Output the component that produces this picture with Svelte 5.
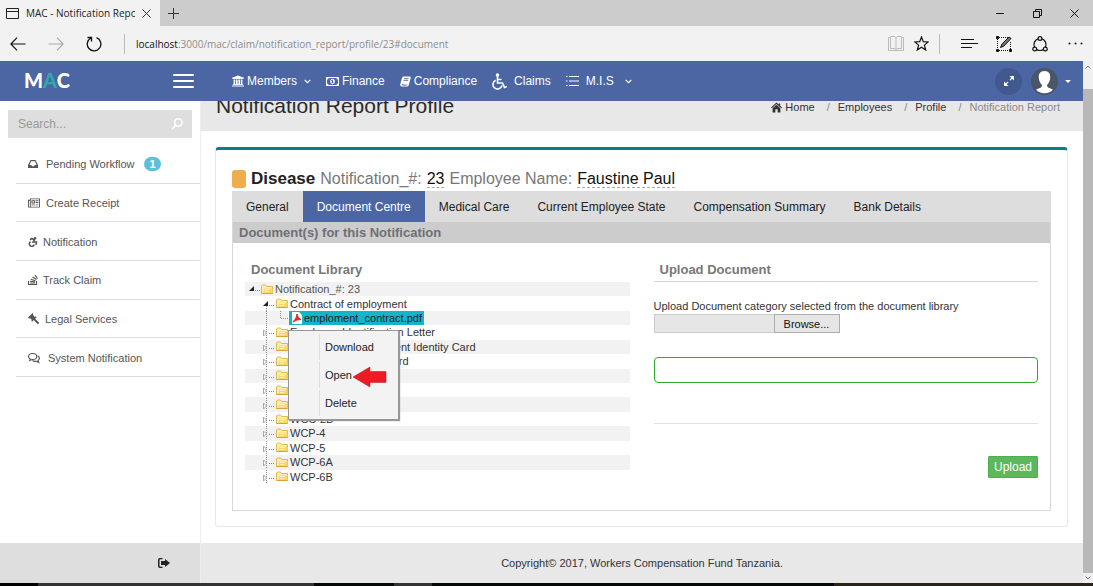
<script>
  const icons = {
    bank: { vb: '0 0 1920 1792', d: 'M960 0l960 384v128h-128q0 26-20.5 45t-48.5 19h-1526q-28 0-48.5-19t-20.5-45h-128v-128zM256 640h256v768h128v-768h256v768h128v-768h256v768h128v-768h256v768h59q28 0 48.5 19t20.5 45v64h-1664v-64q0-26 20.5-45t48.5-19h59v-768zM1851 1600q28 0 48.5 19t20.5 45v128h-1920v-128q0-26 20.5-45t48.5-19h1782z' },
    money: { vb: '0 0 26 18', d: 'M0 0H26V18H0ZM5 2A3 3 0 0 1 2 5V13A3 3 0 0 1 5 16H21A3 3 0 0 1 24 13V5A3 3 0 0 1 21 2ZM13 3.500A4.500 5.500 0 0 1 13 14.500A4.500 5.500 0 0 1 13 3.500ZM12.200 5.500L10.500 7V8H12V11H10.500V12.500H15.500V11H14V5.500Z' },
    book: { vb: '0 0 24 22', d: 'M8 0H22Q24 .5 23.500 3L19 19Q18 22 15 22H3Q0 21 .5 17L4.500 3Q5.500 0 8 0ZM9 4L8.500 6H18.500L19 4ZM8 8L7.500 10H17.500L18 8ZM4 17Q3 19.500 5 19.500H14.500Q16 19.500 17 17L17.500 18Z' },
    inbox: { vb: '0 0 20 18', d: 'M5 1H15L20 11V17H0V11ZM6 3.500L3 11H6.500L8 13.500H12L13.500 11H17L14 3.500Z' },
    news: { vb: '0 0 26 20', d: 'M4 0H26V18Q26 20 24 20H2Q0 20 0 18V3H4ZM6 2V18H24V2ZM2 5V18H4V5ZM7.500 4H15V11H7.500ZM9.500 6V9H13V6ZM16.500 4H22.500V6H16.500ZM16.500 8H22.500V10H16.500ZM7.500 13H15V15H7.500ZM16.500 13H22.500V15H16.500Z' },
    gavel: { vb: '0 0 24 24', d: 'M10 0L12 2L10.500 4L15 8.500L17 7L19 9L15.500 12.500L24 20.500Q24.500 23 21 24L12.500 15.500L9 19L7 17L8.500 15.500L4 11L2.500 12.500L0 10Z' },
    home: { vb: '0 0 24 22', d: 'M12 0L17 4.500V2H20V7.200L24 11L22.500 12.500L12 3.500L1.500 12.500L0 11ZM12 5L20.500 12.500V22H14.500V15H9.500V22H3.500V12.500Z' },
    logout: { vb: '0 0 24 20', d: 'M9 0V2.500H5Q3 2.500 3 5V15Q3 17.500 5 17.500H9V20H4Q0 20 0 16V4Q0 0 4 0ZM14 2L24 10L14 18V14H6V6H14Z' }
  };

  const sideLinks = [
    { icon: 'inbox', label: 'Pending Workflow', badge: '1', w: 10, gap: 8 },
    { icon: 'news', label: 'Create Receipt', w: 12, gap: 6 },
    { icon: 'chair', label: 'Notification', w: 10, gap: 5 },
    { icon: 'stack', label: 'Track Claim', w: 10, gap: 5 },
    { icon: 'gavel', label: 'Legal Services', w: 11, gap: 6 },
    { icon: 'comments', label: 'System Notification', w: 12, gap: 8 }
  ];

  const tabs = ['General', 'Document Centre', 'Medical Care', 'Current Employee State', 'Compensation Summary', 'Bank Details'];
  let activeTab = $state('Document Centre');

  const folders = [
    'Employee Identification Letter',
    "Employee's Government Identity Card",
    'Employee Pension Card',
    'WCC-1', 'WCC-2', 'WCC-2A', 'WCC-2B', 'WCP-4', 'WCP-5', 'WCP-6A', 'WCP-6B'
  ];
</script>

{#snippet glyph(name, w)}
  {#if name === 'chair'}
    <svg width={w} height={w} viewBox="0 0 20 20" fill="none" stroke="currentColor" stroke-width="3" aria-hidden="true">
      <circle cx="14" cy="2.500" r="2.500" fill="currentColor" stroke="none" />
      <path d="M4 5.500L8 3L13 6L10 10H17L16 16M5 9.500A5 5 0 1 0 12.500 15" />
    </svg>
  {:else if name === 'stack'}
    <svg width={w} height={w} viewBox="0 0 20 20" fill="none" stroke="currentColor" stroke-width="2.400" aria-hidden="true">
      <path d="M1 12V19H17V12M4 16H14M4 12.500L14 13.500M5.500 8.500L15 11.500M9 4L17 9M14 0L19 7" />
    </svg>
  {:else if name === 'comments'}
    <svg width={w} height={w} viewBox="0 0 24 22" fill="none" stroke="currentColor" stroke-width="2.200" aria-hidden="true">
      <path d="M9 2C4 2 1 4.500 1 8C1 10.500 2.500 12 4.500 13L3.500 16L8 14C14 14.500 17.500 12 17.500 8S14 2 9 2Z" />
      <path d="M19.500 6.500C23.500 9 24 13.500 20 16L21.500 20L16.500 17.500C13 18 10.500 17.500 9 16" />
    </svg>
  {:else}
    <svg width={w} height={w} viewBox={icons[name].vb} fill="currentColor" fill-rule="evenodd" aria-hidden="true"><path d={icons[name].d} /></svg>
  {/if}
{/snippet}

{#snippet chevron()}
  <svg width="7" height="5" viewBox="0 0 7 5" fill="none" stroke="currentColor" stroke-width="1.200" aria-hidden="true"><path d="M.7 .8L3.500 3.600L6.300 .8" /></svg>
{/snippet}

{#snippet folder()}
  <svg class="folder" width="12" height="11" viewBox="0 0 12 11" aria-hidden="true">
    <path d="M.5 9.500V2L1.500 1H4.500L5.500 2.500H11.500V9.500Z" fill="#fbeeb4" stroke="#e0b850" />
    <path d="M2 9.500L3.500 4.500H11.500V9.500Z" fill="#fbd766" />
    <path d="M4 5.500H9M4 7.500H8" stroke="#fff3c0" />
    <path d="M.5 9.500H11.500" stroke="#d9a23a" />
  </svg>
{/snippet}

<div class="window">
  <div class="titlebar">
    <div class="browsertab">
      <svg width="13" height="11" viewBox="0 0 13 11" fill="none" stroke="#222" aria-hidden="true"><path d="M.5 .5H12.500V10.500H.5ZM.5 3.500H12.500" /></svg>
      <span class="tabname">MAC - Notification Report</span>
      <button class="plain" aria-label="Close tab"><svg width="9" height="9" viewBox="0 0 9 9" stroke="#333"><path d="M.5 .5L8.500 8.500M8.500 .5L.5 8.500" /></svg></button>
    </div>
    <button class="plain newtab" aria-label="New tab"><svg width="11" height="11" viewBox="0 0 11 11" stroke="#333"><path d="M5.500 0V11M0 5.500H11" /></svg></button>
    <div class="winbtns">
      <button class="plain" aria-label="Minimize"><svg width="9" height="9" viewBox="0 0 9 9" stroke="#111"><path d="M0 4.500H8" /></svg></button>
      <button class="plain" aria-label="Restore"><svg width="9" height="9" viewBox="0 0 9 9" fill="none" stroke="#111"><path d="M.5 2.500H6.500V8.500H.5ZM2.500 2.500V.5H8.500V6.500H6.500" /></svg></button>
      <button class="plain" aria-label="Close"><svg width="9" height="9" viewBox="0 0 9 9" stroke="#111"><path d="M.5 .5L8.500 8.500M8.500 .5L.5 8.500" /></svg></button>
    </div>
  </div>

  <div class="addressbar">
    <button class="plain" aria-label="Back"><svg width="16" height="14" viewBox="0 0 16 14" fill="none" stroke="#111" stroke-width="1.200"><path d="M7 .7L.9 7L7 13.300M1 7H15.500" /></svg></button>
    <button class="plain" aria-label="Forward"><svg width="16" height="14" viewBox="0 0 16 14" fill="none" stroke="#aaa" stroke-width="1.200"><path d="M9 .7L15.100 7L9 13.300M15 7H.5" /></svg></button>
    <button class="plain" aria-label="Refresh"><svg width="16" height="16" viewBox="0 0 16 16" fill="none" stroke="#111" stroke-width="1.300"><path d="M5 2A6.800 6.800 0 1 0 10.500 1.700M1.500 1.500H5.500V5.500" /></svg></button>
    <span class="rule"></span>
    <span class="url"><b>localhost</b>:3000/mac/claim/notification_report/profile/23#document</span>
    <div class="tools">
      <button class="plain" aria-label="Reading view"><svg width="16" height="15" viewBox="0 0 16 15" fill="none" stroke="#bbb"><path d="M.5 1.500H2.500V.5H6.500L8 1.500L9.500 .5H13.500V1.500H15.500V14.500H.5V1.500M2.500 1.500V12.500H6.500L8 13.500L9.500 12.500H13.500V1.500M8 1.500V13.500" /></svg></button>
      <button class="plain" aria-label="Favorite"><svg width="15" height="15" viewBox="0 0 15 15" fill="none" stroke="#111" stroke-width="1.200"><path d="M7.500 1L9.300 5.700L14.200 6L10.400 9.100L11.700 14L7.500 11.200L3.300 14L4.600 9.100L.8 6L5.700 5.700Z" /></svg></button>
      <span class="rule"></span>
      <button class="plain hub" aria-label="Hub"><svg width="17" height="11" viewBox="0 0 17 11" stroke="#111"><path d="M0 1.500H13M0 5.500H17M0 9.500H11" /></svg></button>
      <button class="plain" aria-label="Web note"><svg width="16" height="16" viewBox="0 0 16 16" fill="none" stroke="#111"><path d="M3 1.500H13M3 14.500H13M1.500 3V13M14.500 6V13" stroke-dasharray="1 1" /><path d="M.5 .5H2.500V2.500H.5ZM.5 13.500H2.500V15.500H.5ZM13.500 13.500H15.500V15.500H13.500Z" fill="#111" /><path d="M4.500 11.500L6 8L13 1L15 2.500L8 10Z" fill="#777" /></svg></button>
      <button class="plain" aria-label="Share"><svg width="16" height="16" viewBox="0 0 16 16" fill="none" stroke="#111" stroke-width="1.200"><circle cx="8" cy="8.500" r="6" /><circle cx="8" cy="2.500" r="1.900" fill="#f2f2f2" /><circle cx="2.700" cy="13" r="1.900" fill="#f2f2f2" /><circle cx="13.300" cy="13" r="1.900" fill="#f2f2f2" /></svg></button>
      <button class="plain" aria-label="More"><svg width="15" height="3" viewBox="0 0 15 3" fill="#111"><circle cx="1.500" cy="1.500" r="1" /><circle cx="7.500" cy="1.500" r="1" /><circle cx="13.500" cy="1.500" r="1" /></svg></button>
    </div>
  </div>

  <div class="viewport">
    <div class="page">
      <header>
        <div class="brand">
          <a class="logo" href="#home">M<span>A</span>C</a>
          <button class="plain" aria-label="Toggle menu"><svg width="21" height="16" viewBox="0 0 21 16" stroke="#fff" stroke-width="2" stroke-linecap="round"><path d="M1 2H20M1 8H20M1 14H20" /></svg></button>
        </div>
        <nav class="mainnav">
          <a href="#members">{@render glyph('bank', 12)}<span>Members</span><i>{@render chevron()}</i></a>
          <a href="#finance">{@render glyph('money', 13)}<span>Finance</span></a>
          <a href="#compliance">{@render glyph('book', 11)}<span>Compliance</span></a>
          <a class="roomy" href="#claims">
            <svg width="15" height="17" viewBox="0 0 15 17" fill="none" stroke="#fff" stroke-width="1.600" aria-hidden="true"><circle cx="5.500" cy="2" r="1.800" fill="#fff" stroke="none" /><path d="M5.500 3V10H10.500L12.500 14.500L15 13.500M5.500 6.500H9.500M3.700 7.200A4.600 4.600 0 1 0 10 12.500" /></svg>
            <span>Claims</span>
          </a>
          <a class="roomy" href="#mis">
            <svg width="13" height="10" viewBox="0 0 13 10" stroke="#fff" aria-hidden="true"><path d="M0 .5H1.500M3 .5H13M0 5H1.500M3 5H13M0 9.500H1.500M3 9.500H13" /></svg>
            <span>M.I.S</span><i>{@render chevron()}</i>
          </a>
        </nav>
        <div class="user">
          <button class="plain round" aria-label="Full screen"><svg width="10" height="10" viewBox="0 0 10 10" fill="#fff" stroke="#fff"><path d="M6 4L9 1M4 6L1 9" stroke-width="1.300" /><path d="M5.500 0H10V4.500ZM0 5.500V10H4.500Z" stroke="none" /></svg></button>
          <button class="plain account" aria-label="Account">
            <svg width="27" height="27" viewBox="0 0 27 27" aria-hidden="true"><circle cx="13.500" cy="13.500" r="13.500" fill="#4a5568" /><path d="M13.500 3C9 3 7.500 6 7.800 10C8 13 9.500 15.500 11 17C11 19.500 9 20 5 21.500C7 24 10 25.300 13.500 25.300S20 24 22 21.500C18 20 16 19.500 16 17C17.500 15.500 19 13 19.200 10C19.500 6 18 3 13.500 3Z" fill="#fff" /></svg>
            <svg width="6" height="3" viewBox="0 0 6 3" fill="#fff" aria-hidden="true"><path d="M0 0H6L3 3Z" /></svg>
          </button>
        </div>
      </header>

      <div class="body">
        <aside>
          <form class="search">
            <input type="text" placeholder="Search..." aria-label="Search" />
            <button class="plain" type="button" aria-label="Search"><svg width="12" height="12" viewBox="0 0 12 12" fill="none" stroke="#fff" stroke-width="1.500"><circle cx="7.300" cy="4.500" r="3.700" /><path d="M4.700 7.300L.8 11.200" /></svg></button>
          </form>
          <ul class="sidelinks">
            {#each sideLinks as link}
              <li>
                <a href="#side" style:gap="{link.gap}px">
                  {@render glyph(link.icon, link.w)}
                  <span>{link.label}</span>
                </a>
                {#if link.badge}<b class="badge">{link.badge}</b>{/if}
              </li>
            {/each}
          </ul>
          <div class="sidefoot"><button class="plain" aria-label="Log out">{@render glyph('logout', 12)}</button></div>
        </aside>

        <main>
          <div class="pagehead">
            <h1>Notification Report Profile</h1>
            <ol class="crumbs">
              <li><a href="#home">{@render glyph('home', 11)}Home</a></li>
              <li><a href="#employees">Employees</a></li>
              <li><a href="#profile">Profile</a></li>
              <li class="current">Notification Report</li>
            </ol>
          </div>

          <section class="card">
            <h2><span class="flag"></span><span class="line"><strong>Disease</strong> <span>Notification_#:</span> <a href="#n23">23</a> <span>Employee Name:</span> <a href="#employee">Faustine Paul</a></span></h2>
            <div class="tabs" role="tablist">
              {#each tabs as tab}
                <button role="tab" aria-selected={activeTab === tab} class:active={activeTab === tab} onclick={() => (activeTab = tab)}>{tab}</button>
              {/each}
            </div>
            <div class="panel">
              <h3>Document(s) for this Notification</h3>
              <div class="columns">
                <div class="library">
                  <h4>Document Library</h4>
                  <ul class="tree">
                    <li class="root"><svg width="12" height="14" viewBox="0 0 12 14" aria-hidden="true"><path d="M1 9H6V4Z" fill="#222" /><path d="M7 8.500H12" stroke="#888" stroke-dasharray="1 1" /></svg>{@render folder()}<span>Notification_#: 23</span></li>
                    <li class="branch"><svg width="12" height="14" viewBox="0 0 12 14" aria-hidden="true"><path d="M0 9H5V4Z" fill="#222" /><path d="M6 8.500H12M3.500 9V14" stroke="#888" stroke-dasharray="1 1" /></svg>{@render folder()}<span>Contract of employment</span></li>
                    <li class="file">
                      <svg width="24" height="14" viewBox="0 0 24 14" fill="none" stroke="#888" stroke-dasharray="1 1" aria-hidden="true"><path d="M2.500 0V14M16.500 0V7.500H24" /></svg>
                      <span class="selected">
                        <svg width="12" height="12" viewBox="0 0 12 12" aria-hidden="true"><path d="M1 0H8L11 3V12H1Z" fill="#fff" /><path d="M2 10Q6 6 6 2Q7 7 10 7.500Q6 7 2 10Z" fill="#e02a20" stroke="#e02a20" stroke-width="1" /></svg>
                        emploment_contract.pdf
                      </span>
                      <div class="menu" role="menu">
                        <button role="menuitem">Download</button>
                        <button role="menuitem">Open
                          <svg class="pointer" width="34" height="20" viewBox="0 0 34 20" aria-hidden="true"><path d="M0 10L17 0V4.500H33V15.500H17V20Z" fill="#ed1c24" stroke="#b81219" stroke-width=".5" /></svg>
                        </button>
                        <button role="menuitem">Delete</button>
                      </div>
                    </li>
                    {#each folders as name}
                      <li class="branch"><svg width="12" height="14" viewBox="0 0 12 14" fill="none" stroke="#888" aria-hidden="true"><path d="M3.500 0V14M6 8.500H12" stroke-dasharray="1 1" /><path d="M.5 5V11L3.500 8Z" fill="#fff" stroke="#aaa" /></svg>{@render folder()}<span>{name}</span></li>
                    {/each}
                  </ul>
                </div>
                <form class="upload">
                  <h4>Upload Document</h4>
                  <label for="docfile">Upload Document category selected from the document library</label>
                  <div class="filepick">
                    <input id="docfile" type="text" readonly />
                    <button type="button">Browse...</button>
                  </div>
                  <input class="result" type="text" aria-label="Selected category" />
                  <hr />
                  <button class="submit" type="button">Upload</button>
                </form>
              </div>
            </div>
          </section>

          <footer>Copyright© 2017, Workers Compensation Fund Tanzania.</footer>
        </main>
      </div>
    </div>
    <div class="scrollbar">
      <svg width="6" height="4" viewBox="0 0 6 4" fill="none" stroke="#777" aria-hidden="true"><path d="M.5 3.500L3 1L5.500 3.500" /></svg>
      <span class="thumb"></span>
      <svg width="6" height="4" viewBox="0 0 6 4" fill="none" stroke="#777" aria-hidden="true"><path d="M.5 .5L3 3L5.500 .5" /></svg>
    </div>
  </div>
  <div class="taskbar"></div>
</div>

<style>
  :global(body) { background: #fff; }
  .window { display: flex; flex-direction: column; min-height: 100vh; font: 11px/14px "Liberation Sans", Arial, sans-serif; color: #333; }
  .window, .window * { box-sizing: border-box; }
  a { color: inherit; text-decoration: none; }
  svg { display: block; flex: none; }
  h1, h2, h3, h4, ul, ol { margin: 0; padding: 0; list-style: none; }
  button { font: inherit; color: inherit; cursor: pointer; }
  .plain { display: flex; align-items: center; justify-content: center; padding: 0; border: 0; background: none; }

  .titlebar { display: flex; align-items: stretch; height: 26px; background: #ccc; font-family: "Open Sans", "Noto Sans", sans-serif; font-size: 10px; color: #222; }
  .browsertab { display: flex; align-items: center; gap: 7px; width: 160px; padding: 0 9px 0 6px; background: #f2f2f2; }
  .tabname { flex: 1; overflow: hidden; white-space: nowrap; }
  .newtab { width: 27px; }
  .winbtns { display: flex; gap: 28px; margin-left: auto; padding-right: 14px; }

  .addressbar { display: flex; align-items: center; height: 35px; padding: 0 10px; background: #f2f2f2; font-family: "Open Sans", "Noto Sans", sans-serif; font-size: 10px; gap: 22px; }
  .rule { width: 1px; height: 20px; background: #bbb; }
  .url { margin-left: -11px; color: #8c8c8c; white-space: nowrap; }
  .url b { font-weight: 400; color: #111; }
  .tools { display: flex; align-items: center; gap: 10px; margin-left: auto; }
  .tools .hub { margin-left: 11px; margin-right: 8px; }
  .tools .hub ~ button:not(:last-child) { margin-right: 10px; }

  .viewport { display: flex; flex: 1; }
  .page { display: flex; flex: 1; flex-direction: column; min-width: 0; }
  header { display: flex; align-items: center; height: 40px; background: #4b66a3; color: #fff; font-size: 12px; }
  .brand { display: flex; align-items: center; justify-content: space-between; width: 200px; padding: 0 6px 0 24px; }
  .logo { font: 900 20px/24px Lato, sans-serif; margin-top: -3px; }
  .logo span { color: #2fa9a9; }
  .mainnav { display: flex; align-items: center; gap: 15px; padding-left: 32px; }
  .mainnav a { display: flex; align-items: center; gap: 3px; }
  .mainnav a.roomy { gap: 7px; }
  .mainnav i { padding: 0 0 0 4px; }
  .user { display: flex; gap: 9px; margin-left: auto; padding-right: 12px; }
  .round { width: 27px; height: 27px; border-radius: 50%; background: #41598f; }
  .account { gap: 7px; }

  .body { display: flex; flex: 1; }
  aside { display: flex; flex-direction: column; width: 201px; border-right: 1px solid #eee; background: #fff; color: #555; }
  .search { display: flex; align-items: center; height: 28px; margin: 9px 8px 0 8px; padding: 0 9px 0 10px; background: #dedede; }
  .search input { flex: 1; min-width: 0; padding: 0; border: 0; background: none; font: 12px/16px "Liberation Sans", Arial, sans-serif; outline: 0; }
  .search input::placeholder { color: #999; opacity: 1; }
  .sidelinks { display: grid; grid-auto-rows: 1fr; min-height: 232px; margin: 7px 0 0 16px; }
  .sidelinks li { display: flex; align-items: center; gap: 10px; padding: 1px 0 0 12px; border-bottom: 1px solid #dcdce6; }
  .sidelinks a { display: flex; align-items: center; }
  .badge { padding: 0 5px; border-radius: 8px; background: #5bc0de; color: #fff; font-size: 11px; }
  .sidefoot { display: flex; align-items: center; height: 40px; margin-top: auto; padding-left: 158px; background: #dedede; color: #222; }

  main { display: flex; flex: 1; flex-direction: column; min-width: 0; }
  .pagehead { display: flex; justify-content: space-between; height: 30px; padding: 0 23px 0 15px; overflow: hidden; background: #e8e8e8; }
  h1 { margin-top: -7px; color: #2a2a2a; font-size: 21px; font-weight: 400; line-height: 24px; }
  .crumbs { display: flex; margin-top: -1px; line-height: 14px; }
  .crumbs li + li::before { content: "/"; padding: 0 8px 0 12px; color: #888; }
  .crumbs li, .crumbs a { display: flex; align-items: center; gap: 3px; height: 14px; }
  .crumbs li { gap: 0; }
  .crumbs .current { color: #888; }

  .card { flex: 1; display: flex; flex-direction: column; margin: 16px 15px 16px 14px; padding: 16px 16px 15px; border: 1px solid #e8e8e8; border-top: 3px solid #0b7f86; border-radius: 4px; }
  h2 { display: flex; align-items: center; gap: 5px; height: 25px; color: #777; font-size: 16px; font-weight: 400; line-height: 18px; white-space: nowrap; }
  .line { display: flex; align-items: baseline; gap: 5px; }
  h2 strong { color: #222; font-size: 17px; }
  h2 a { border-bottom: 1px dashed #aaa; color: #111; line-height: 16px; }
  .flag { width: 14px; height: 18px; border-radius: 3px; background: #f0ad4e; }
  .tabs { display: flex; height: 31px; background: #ddd; color: #222; font-size: 12px; }
  .tabs button { padding: 0 14px; border: 0; background: none; white-space: nowrap; }
  .tabs .active { background: #4b66a3; color: #fff; }
  .panel { flex: 1; border: 1px solid #d8d8d8; border-top: 0; }
  h3 { padding: 0 6px; background: #ccc; color: #6c7076; font-size: 13px; line-height: 21px; }
  .columns { display: grid; grid-template-columns: 1fr 1fr; gap: 24px; padding: 17px 12px 0; }
  h4 { padding: 0 6px; color: #777; font-size: 13px; line-height: 20px; }
  .tree { display: grid; grid-auto-rows: 1fr; min-height: 202px; margin-top: 2px; }
  .tree li { display: flex; align-items: center; position: relative; min-height: 0; height: 100%; line-height: 14px; white-space: nowrap; }
  .tree li:nth-child(odd) { background: #f2f2f2; }
  .tree span { padding-left: 2px; }
  .folder { margin-left: 1px; }
  .root { padding-left: 3px; color: #555; }
  .branch { padding-left: 18px; }
  .file { padding-left: 19px; }
  .tree .selected { display: flex; align-items: center; gap: 1px; padding: 0 2px; background: #12b5cb; border-left: 1px solid #fff; color: #222; }
  .menu { position: absolute; z-index: 2; top: 19px; left: 43px; display: flex; flex-direction: column; width: 111px; padding: 2px; border: 1px solid #979797; background: #f3f3f3; box-shadow: 1px 1px 1px #999; }
  .menu button { position: relative; height: 28px; padding: 0 0 0 34px; border: 0; background: linear-gradient(#ddd, #ddd) 28px 50% / 1px 26px no-repeat; color: #222; text-align: left; }
  .pointer { position: absolute; top: 6px; left: 62px; }

  .upload { display: flex; flex-direction: column; align-items: stretch; min-width: 0; }
  .upload h4 { height: 22px; border-bottom: 1px solid #d4d4d4; }
  .upload label { margin-top: 17px; }
  .filepick { display: flex; height: 19px; margin-top: 1px; }
  .filepick input { width: 120px; border: 1px solid #ccc; border-right: 0; background: #e6e6e6; }
  .filepick button { width: 66px; padding: 0; border: 1px solid #adadad; background: #e6e6e6; color: #111; }
  .result { height: 26px; margin-top: 24px; border: 1px solid #2eab2e; border-radius: 4px; background: #fff; }
  hr { width: 100%; margin: 40px 0 0; border: 0; border-top: 1px solid #e2e2e2; }
  .submit { align-self: flex-end; width: 50px; height: 22px; margin-top: 32px; padding: 0; border: 1px solid #4cae4c; border-radius: 1px; background: #5cb85c; color: #fff; font-size: 12px; }

  footer { display: flex; align-items: center; justify-content: center; height: 40px; background: #e8e8e8; }

  .scrollbar { display: flex; flex-direction: column; align-items: center; width: 10px; padding: 4px 0 3px; gap: 3px; background: #f0f0f0; }
  .thumb { flex: 1; align-self: stretch; margin-top: 17px; background: #b8b8b8; }
  .taskbar { height: 3px; background: linear-gradient(90deg, #000 38px, #333 38px 314px, #050808 314px 394px, #333 394px 432px, #050808 432px 834px, #2a2418 834px); }
</style>
